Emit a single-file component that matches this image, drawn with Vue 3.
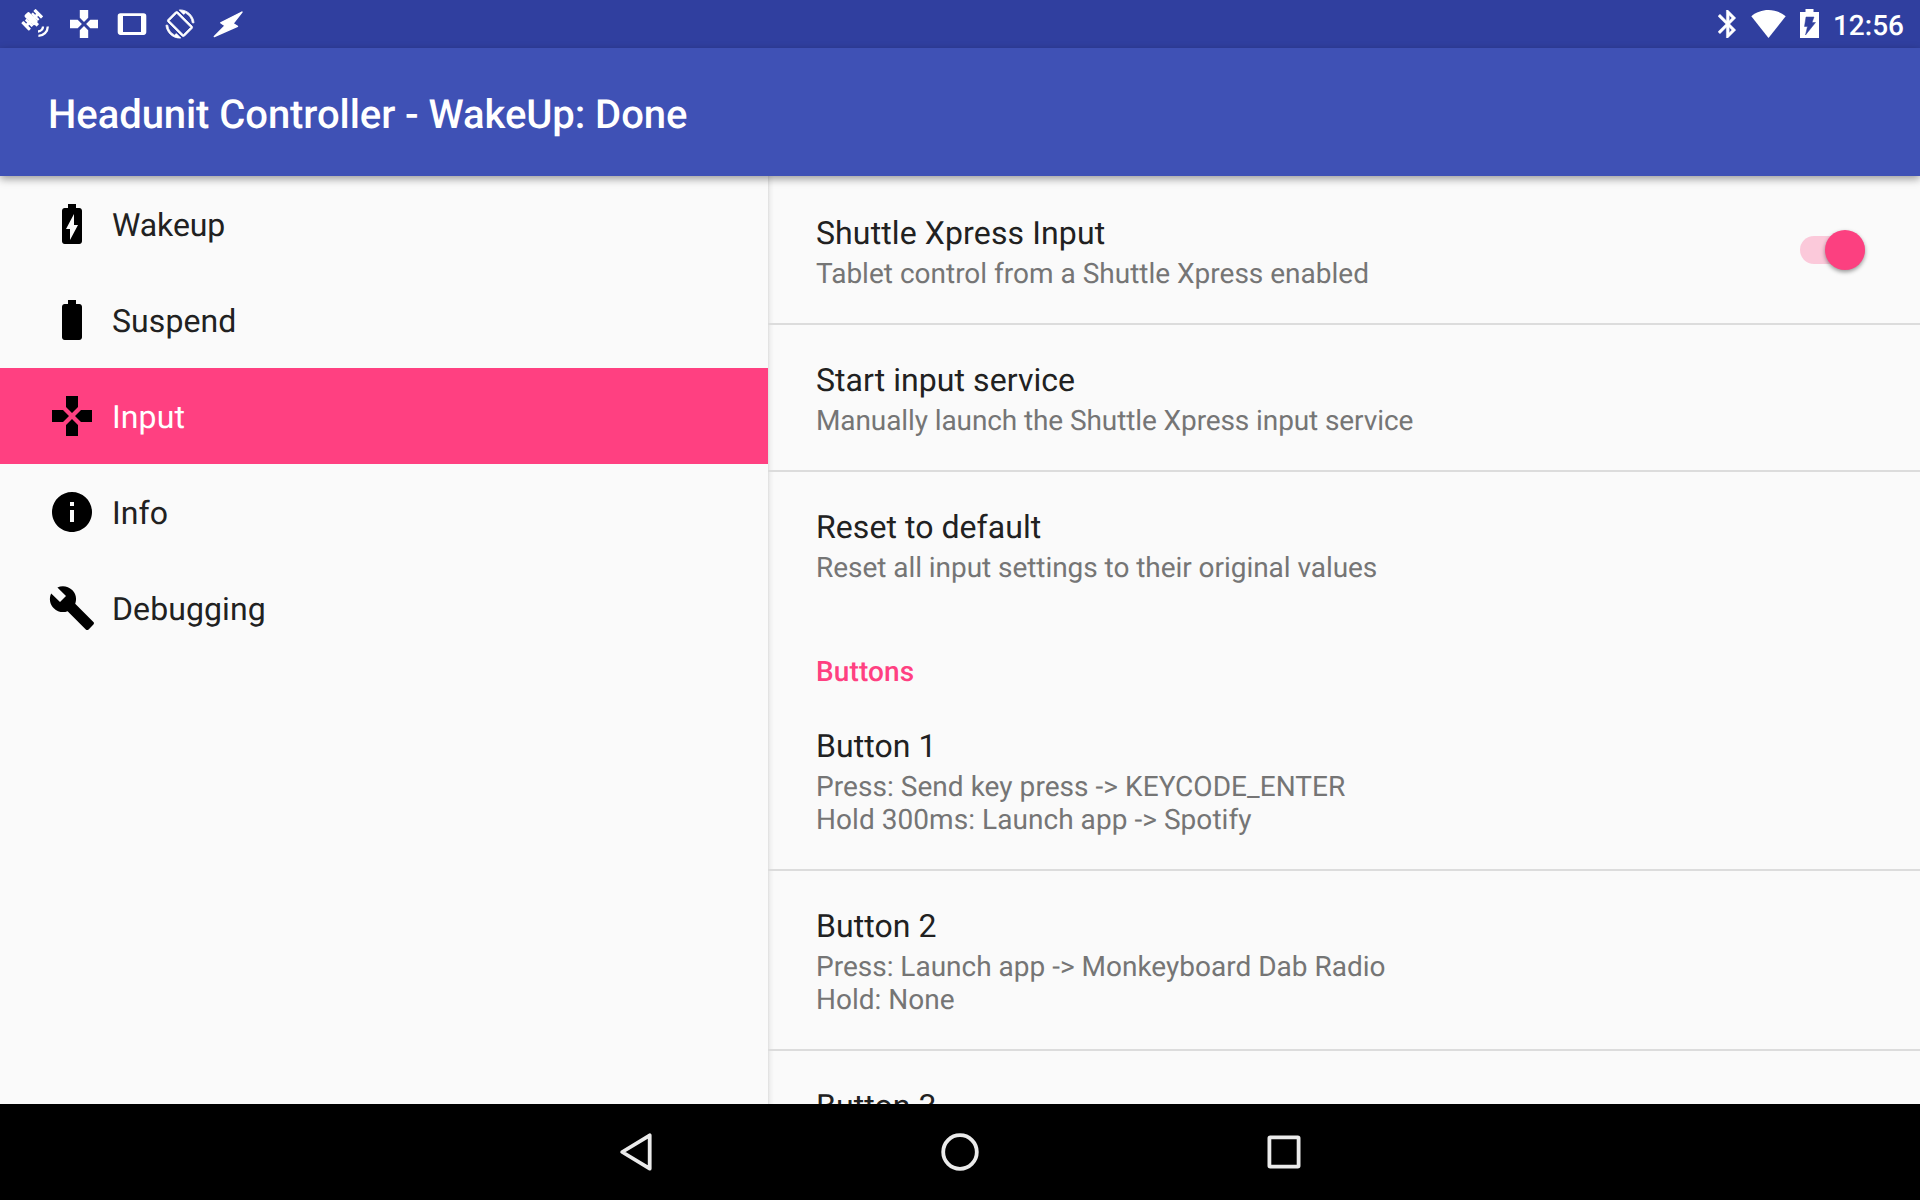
<script setup>
const sections = [
  {
    label: 'Wakeup',
    icon: 'M15.67 4H14V2h-4v2H8.33C7.6 4 7 4.6 7 5.33v15.33C7 21.4 7.6 22 8.33 22h7.33c.74 0 1.34-.6 1.34-1.33V5.33C17 4.6 16.4 4 15.67 4z',
    bolt: true,
  },
  {
    label: 'Suspend',
    icon: 'M15.67 4H14V2h-4v2H8.33C7.6 4 7 4.6 7 5.33v15.33C7 21.4 7.6 22 8.33 22h7.33c.74 0 1.34-.6 1.34-1.33V5.33C17 4.6 16.4 4 15.67 4z',
  },
  {
    label: 'Input',
    active: true,
    icon: 'M15 7.5V2H9v5.5l3 3 3-3zM7.5 9H2v6h5.5l3-3-3-3zM9 16.5V22h6v-5.5l-3-3-3 3zM16.5 9l-3 3 3 3H22V9h-5.5z',
  },
  {
    label: 'Info',
    icon: 'M12 2C6.48 2 2 6.48 2 12s4.48 10 10 10 10-4.48 10-10S17.52 2 12 2zm1 15h-2v-6h2v6zm0-8h-2V7h2v2z',
  },
  {
    label: 'Debugging',
    icon: 'M22.7 19l-9.1-9.1c.9-2.3.4-5-1.5-6.9-2-2-5-2.4-7.4-1.3L9 6 6 9 1.6 4.7C.4 7.1.9 10.1 2.9 12.1c1.9 1.9 4.6 2.4 6.9 1.5l9.1 9.1c.4.4 1 .4 1.4 0l2.3-2.3c.5-.4.5-1.1.1-1.4z',
  },
]

const general = [
  { title: 'Shuttle Xpress Input', lines: ['Tablet control from a Shuttle Xpress enabled'], toggle: true },
  { title: 'Start input service', lines: ['Manually launch the Shuttle Xpress input service'], tight: true },
  { title: 'Reset to default', lines: ['Reset all input settings to their original values'], snug: true },
]

const buttons = [
  { title: 'Button 1', lines: ['Press: Send key press -> KEYCODE_ENTER', 'Hold 300ms: Launch app -> Spotify'], loose: true },
  { title: 'Button 2', lines: ['Press: Launch app -> Monkeyboard Dab Radio', 'Hold: None'] },
  { title: 'Button 3', lines: [] },
]
</script>

<template>
  <div class="screen">
    <div class="status">
      <div class="notifications">
        <svg width="48" height="48" viewBox="0 0 48 48" fill="#fff">
          <g transform="translate(20.200 19.800) rotate(45)">
            <rect x="-8.600" y="-3.300" width="14" height="6.600" rx="1.800" />
            <rect x="-1.500" y="-9" width="3" height="18" />
            <rect x="-5.400" y="-10.200" width="10.800" height="3.200" rx=".6" />
            <rect x="-4.800" y="-5.600" width="9.600" height="2.400" rx=".5" />
            <rect x="-5.400" y="7" width="10.800" height="3.200" rx=".6" />
            <rect x="-4.800" y="3.200" width="9.600" height="2.400" rx=".5" />
            <rect x="4" y="-1.800" width="4" height="3.600" rx=".6" />
          </g>
          <path d="M31 26.500a5 5 0 0 1-5 5M35.800 26.500a9.400 9.400 0 0 1-9.400 9.300" fill="none" stroke="#fff" stroke-width="2.300" />
        </svg>
        <svg width="48" height="48" viewBox="0 0 48 48">
          <path transform="translate(7.200 7.200) scale(1.400)" fill="#fff" d="M15 7.500V2H9v5.500l3 3 3-3zM7.500 9H2v6h5.500l3-3-3-3zM9 16.500V22h6v-5.500l-3-3-3 3zM16.500 9l-3 3 3 3H22V9h-5.500z" />
        </svg>
        <svg width="48" height="48" viewBox="0 0 48 48">
          <path fill="#fff" fill-rule="evenodd" d="M12.500 13.300h23a2.800 2.800 0 0 1 2.800 2.800v16a2.800 2.800 0 0 1-2.800 2.800h-23a2.800 2.800 0 0 1-2.800-2.800v-16a2.800 2.800 0 0 1 2.800-2.800zM15 16v16h18V16z" />
        </svg>
        <svg width="48" height="48" viewBox="0 0 48 48">
          <path transform="translate(9.900 9.900) scale(1.175)" fill="#fff" stroke="#fff" stroke-width=".7" d="M16.480 2.520c3.270 1.550 5.610 4.720 5.970 8.480h1.500C23.440 4.840 18.290 0 12 0l-.66.03 3.810 3.810 1.330-1.320zm-6.250-.77c-.59-.59-1.540-.59-2.120 0L1.750 8.110c-.59.59-.59 1.540 0 2.120l12.020 12.020c.59.59 1.540.59 2.120 0l6.360-6.360c.59-.59.59-1.540 0-2.120L10.230 1.750zm4.600 19.440L2.810 9.170l6.360-6.360 12.020 12.020-6.360 6.360zm-7.310.29C4.250 19.940 1.910 16.760 1.550 13H.05C.56 19.160 5.710 24 12 24l.66-.03-3.810-3.810-1.330 1.320z" />
        </svg>
        <svg class="soft" width="48" height="48" viewBox="0 0 48 48">
          <path fill="#fff" stroke="#fff" stroke-width="1.400" stroke-linejoin="round" d="M38 12L16.700 22.800l4.300 3L10.300 36.500l23.200-10.200-4.500-2.800z" />
        </svg>
      </div>
      <div class="system">
        <svg width="18" height="28" viewBox="5 2 12.860 20">
          <path fill="#fff" stroke="#fff" stroke-width=".3" d="M17.710 7.710L12 2h-1v7.590L6.410 5 5 6.410 10.590 12 5 17.590 6.410 19 11 14.410V22h1l5.710-5.710-4.300-4.290 4.300-4.290zM13 5.830l1.880 1.880L13 9.590V5.830zm1.880 10.460L13 18.170v-3.760l1.880 1.880z" />
        </svg>
        <svg class="wifi" width="35" height="28" viewBox="0 0 35 28">
          <path fill="#fff" d="M17.500 28L.3 6.200C5 2.300 11 0 17.500 0s12.500 2.300 17.200 6.200z" />
        </svg>
        <svg class="battery" width="19" height="29" viewBox="0 0 19 29">
          <path fill="#fff" d="M5.500 0h8v3H19v26H0V3h5.500z" />
          <path fill="#303f9f" stroke="#303f9f" stroke-opacity=".5" stroke-width="1" d="M6 8h8l-2 5.500h3.500L5.500 26l2-8.500H4.500z" />
        </svg>
        <span class="clock">12:56</span>
      </div>
    </div>

    <header class="appbar">Headunit Controller - WakeUp: Done</header>

    <main class="panes">
      <nav class="menu">
        <div v-for="s in sections" :key="s.label" class="entry" :class="{ active: s.active }">
          <svg width="48" height="48" viewBox="0 0 24 24">
            <path :d="s.icon" />
            <path v-if="s.bolt" fill="#fafafa" d="M11 20v-5.500H9L13 7v5.500h2L11 20z" />
          </svg>
          <span>{{ s.label }}</span>
        </div>
      </nav>
      <section class="settings">
        <div v-for="p in general" :key="p.title" class="pref" :class="{ tight: p.tight, snug: p.snug }">
          <div class="text">
            <div class="title">{{ p.title }}</div>
            <div v-for="l in p.lines" :key="l" class="summary">{{ l }}</div>
          </div>
          <div v-if="p.toggle" class="switch"><div class="thumb"></div></div>
        </div>
        <h2 class="category">Buttons</h2>
        <div v-for="p in buttons" :key="p.title" class="pref two" :class="{ loose: p.loose }">
          <div class="text">
            <div class="title">{{ p.title }}</div>
            <div v-for="l in p.lines" :key="l" class="summary">{{ l }}</div>
          </div>
        </div>
      </section>
    </main>

    <footer class="navbar">
      <svg width="48" height="48" viewBox="0 0 48 48"><path d="M10.200 24L37.700 7.300v33.400z" /></svg>
      <svg width="48" height="48" viewBox="0 0 48 48"><circle cx="24" cy="24" r="16.800" /></svg>
      <svg width="48" height="48" viewBox="0 0 48 48"><rect x="9.400" y="9.400" width="29.200" height="29.200" rx=".8" /></svg>
    </footer>
  </div>
</template>

<style>
body {
  margin: 0;
  overflow: hidden;
}
</style>

<style scoped>
.screen {
  width: 1920px;
  height: 1200px;
  display: flex;
  flex-direction: column;
  overflow: hidden;
  background: #fafafa;
  font-family: Roboto, "Liberation Sans", sans-serif;
  text-rendering: geometricPrecision;
  color: #212121;
}
svg {
  display: block;
  flex: none;
}
.status {
  height: 48px;
  flex: none;
  display: flex;
  justify-content: space-between;
  background: #303f9f;
}
.notifications {
  display: flex;
  padding-left: 12px;
}
.soft {
  filter: blur(0.7px);
}
.system {
  display: flex;
  align-items: center;
  padding-right: 16px;
}
.wifi {
  margin-left: 15px;
}
.battery {
  margin: 0 14px 1px 14px;
}
.clock {
  font-size: 28px;
  line-height: 48px;
  font-weight: 500;
  color: #fff;
  padding-top: 3px;
}
.appbar {
  height: 128px;
  flex: none;
  box-sizing: border-box;
  padding: 3px 0 0 48px;
  background: #3f51b5;
  color: #fff;
  font-size: 40px;
  line-height: 128px;
  font-weight: 500;
  letter-spacing: -0.07px;
  position: relative;
  z-index: 1;
  box-shadow: 0 3px 8px rgba(0, 0, 0, 0.38);
}
.panes {
  height: 928px;
  flex: none;
  display: flex;
  overflow: hidden;
}
.menu {
  width: 768px;
  flex: none;
}
.entry {
  height: 96px;
  display: flex;
  align-items: center;
  gap: 16px;
  padding-left: 48px;
  font-size: 32px;
  line-height: 38px;
  letter-spacing: 0.1px;
}
.entry:first-child {
  letter-spacing: -0.1px;
}
.entry span {
  padding-top: 2px;
}
.entry.active {
  background: #ff4081;
  color: #fff;
}
.entry svg {
  fill: #000;
}
.settings {
  flex: 1;
  background: linear-gradient(90deg, #dedede 0, #f0f0f0 2px, #fafafa 6px);
}
.pref {
  height: 147px;
  box-sizing: border-box;
  border-top: 2px solid #dcdcdc;
  padding: 36px 55px 0 48px;
  display: flex;
  justify-content: space-between;
}
.pref.two {
  height: 180px;
}
.pref:first-child,
.category + .pref {
  border-top-color: transparent;
}
.title {
  font-size: 32px;
  line-height: 38px;
  margin-bottom: 5px;
  letter-spacing: 0.06px;
}
.pref:first-child .title {
  letter-spacing: 0.12px;
}
.summary {
  font-size: 28px;
  line-height: 33px;
  color: #757575;
}
.tight .summary {
  letter-spacing: -0.1px;
}
.snug .summary {
  letter-spacing: -0.05px;
}
.loose .summary {
  letter-spacing: 0.05px;
}
.category {
  height: 72px;
  box-sizing: border-box;
  margin: 0;
  padding: 38px 0 0 48px;
  font-size: 28px;
  line-height: 33px;
  font-weight: 500;
  letter-spacing: 0.12px;
  color: #ff4081;
}
.switch {
  width: 65px;
  height: 28px;
  margin-top: 22px;
  border-radius: 14px;
  background: #fbc9da;
  display: flex;
  align-items: center;
  justify-content: flex-end;
}
.thumb {
  width: 40px;
  height: 40px;
  flex: none;
  border-radius: 50%;
  background: #fc4080;
  box-shadow: 0 2px 4px rgba(0, 0, 0, 0.4);
}
.navbar {
  height: 96px;
  flex: none;
  display: flex;
  align-items: center;
  justify-content: center;
  gap: 276px;
  background: #000;
}
.navbar svg {
  fill: none;
  stroke: #ebebeb;
  stroke-width: 3.8;
  stroke-linejoin: round;
}
</style>
